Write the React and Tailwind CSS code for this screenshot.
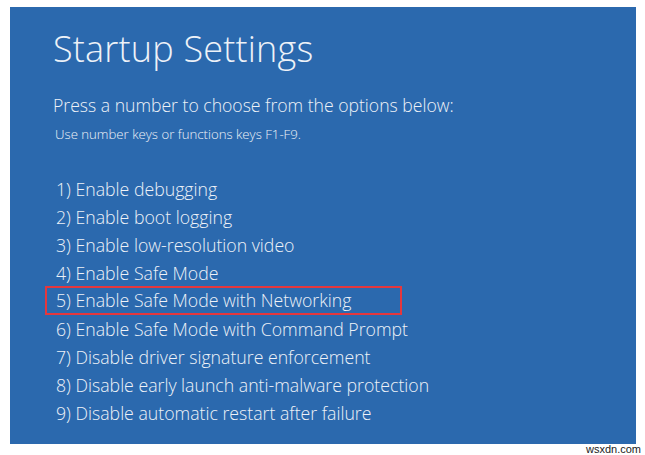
import React from 'react';

const options = [
  '1) Enable debugging',
  '2) Enable boot logging',
  '3) Enable low-resolution video',
  '4) Enable Safe Mode',
  '5) Enable Safe Mode with Networking',
  '6) Enable Safe Mode with Command Prompt',
  '7) Disable driver signature enforcement',
  '8) Disable early launch anti-malware protection',
  '9) Disable automatic restart after failure',
];

const App = () => {
  return (
    <div className="w-[645px] h-[455px] bg-white flex flex-col font-['Segoe_UI','Open_Sans',sans-serif]">
      {/* Blue startup screen */}
      <div className="mt-[7px] ml-[10px] w-[626px] h-[437px] bg-[#2b69ae] text-[#eef2f8] pl-[43px] pt-[16px]">
        <h1 className="text-[36px] font-light leading-[52px] tracking-[0.2px]">Startup Settings</h1>
        <p className="mt-[17px] text-[17.6px] font-light leading-[26px]">
          Press a number to choose from the options below:
        </p>
        <p className="mt-[6px] ml-[2px] text-[13.2px] font-light leading-[20px]">
          Use number keys or functions keys F1-F9.
        </p>

        <ul className="mt-[31px] flex flex-col">
          {options.map((label, i) => (
            <li
              key={label}
              className={`flex items-center text-[17.7px] font-light ${
                i === 4
                  ? 'h-[29px] -mt-[1px] -ml-[8px] pl-[9px] w-[357px] border-2 border-[#e5373d]'
                  : 'h-[28px] ml-[3px]'
              }`}
            >
              {label}
            </li>
          ))}
        </ul>
      </div>

      <div className="flex-1 flex justify-end items-start pr-[4px]">
        <span className="text-[11px] leading-[11px] text-[#1a1a1a] font-['Liberation_Sans',sans-serif]">wsxdn.com</span>
      </div>
    </div>
  );
};

export default App;
